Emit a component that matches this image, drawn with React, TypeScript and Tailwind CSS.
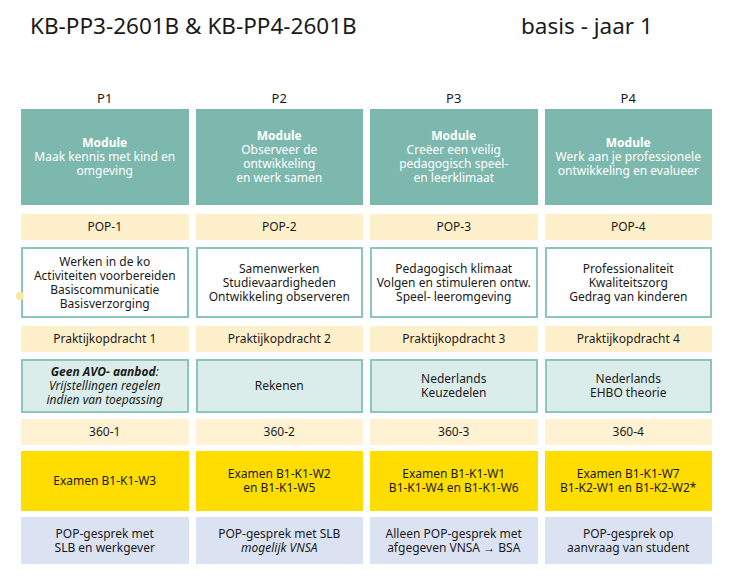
const font = { fontFamily: '"Noto Sans", "Open Sans", sans-serif' };

type Col = {
  p: string;
  module: string[];
  pop: string;
  topics: string[];
  opdracht: string;
  extra: React.ReactNode;
  r360: string;
  examen: string[];
  gesprek: React.ReactNode;
};

const cols: Col[] = [
  {
    p: "P1",
    module: ["Maak kennis met kind en", "omgeving"],
    pop: "POP-1",
    topics: ["Werken in de ko", "Activiteiten voorbereiden", "Basiscommunicatie", "Basisverzorging"],
    opdracht: "Praktijkopdracht 1",
    extra: (
      <span className="italic">
        <b>Geen AVO- aanbod</b>:<br />
        Vrijstellingen regelen
        <br />
        indien van toepassing
      </span>
    ),
    r360: "360-1",
    examen: ["Examen B1-K1-W3"],
    gesprek: (
      <>
        POP-gesprek met
        <br />
        SLB en werkgever
      </>
    ),
  },
  {
    p: "P2",
    module: ["Observeer de", "ontwikkeling", "en werk samen"],
    pop: "POP-2",
    topics: ["Samenwerken", "Studievaardigheden", "Ontwikkeling observeren"],
    opdracht: "Praktijkopdracht 2",
    extra: <>Rekenen</>,
    r360: "360-2",
    examen: ["Examen B1-K1-W2", "en B1-K1-W5"],
    gesprek: (
      <>
        POP-gesprek met SLB
        <br />
        <i>mogelijk VNSA</i>
      </>
    ),
  },
  {
    p: "P3",
    module: ["Creëer een veilig", "pedagogisch speel-", "en leerklimaat"],
    pop: "POP-3",
    topics: ["Pedagogisch klimaat", "Volgen en stimuleren ontw.", "Speel- leeromgeving"],
    opdracht: "Praktijkopdracht 3",
    extra: (
      <>
        Nederlands
        <br />
        Keuzedelen
      </>
    ),
    r360: "360-3",
    examen: ["Examen B1-K1-W1", "B1-K1-W4 en B1-K1-W6"],
    gesprek: (
      <>
        Alleen POP-gesprek met
        <br />
        afgegeven VNSA → BSA
      </>
    ),
  },
  {
    p: "P4",
    module: ["Werk aan je professionele", "ontwikkeling en evalueer"],
    pop: "POP-4",
    topics: ["Professionaliteit", "Kwaliteitszorg", "Gedrag van kinderen"],
    opdracht: "Praktijkopdracht 4",
    extra: (
      <>
        Nederlands
        <br />
        EHBO theorie
      </>
    ),
    r360: "360-4",
    examen: ["Examen B1-K1-W7", "B1-K2-W1 en B1-K2-W2*"],
    gesprek: (
      <>
        POP-gesprek op
        <br />
        aanvraag van student
      </>
    ),
  },
];

export default function App() {
  return (
    <div className="relative w-[751px] h-[577px] bg-white text-[#1a1a1a]" style={font}>
      <div className="flex pt-[10px] pl-[30px] h-[87px] text-[22.5px] leading-[32px]">
        <h1 className="w-[491px]">KB-PP3-2601B &amp; KB-PP4-2601B</h1>
        <h1>basis - jaar 1</h1>
      </div>

      <span className="absolute left-[16px] top-[292px] h-[8px] w-[8px] rounded-full bg-[#f6ec9c]" />

      <div className="ml-[21px] grid w-[691px] grid-cols-4 gap-x-[7px] text-center text-[12px] leading-[14px]">
        {cols.map((c) => (
          <div key={c.p} className="flex flex-col">
            <div className="h-[22px] text-[13px] leading-[22px]">{c.p}</div>
            <div className="flex h-[96px] flex-col items-center justify-center bg-[#7db8ae] text-white">
              <b>Module</b>
              {c.module.map((l) => (
                <span key={l}>{l}</span>
              ))}
            </div>
            <div className="mt-[9px] flex h-[26px] items-center justify-center bg-[#fff0cc]">{c.pop}</div>
            <div className="mt-[7px] flex h-[71px] flex-col items-center justify-center border-2 border-[#8cc5bb] bg-white">
              {c.topics.map((l) => (
                <span key={l}>{l}</span>
              ))}
            </div>
            <div className="mt-[8px] flex h-[26px] items-center justify-center bg-[#fff0cc]">{c.opdracht}</div>
            <div className="mt-[7px] flex h-[54px] items-center justify-center border-2 border-[#8cc5bb] bg-[#dbedea]">
              <div>{c.extra}</div>
            </div>
            <div className="mt-[6px] flex h-[26px] items-center justify-center bg-[#fff2d2]">{c.r360}</div>
            <div className="mt-[6px] flex h-[60px] flex-col items-center justify-center bg-[#ffdd00]">
              {c.examen.map((l) => (
                <span key={l}>{l}</span>
              ))}
            </div>
            <div className="mt-[6px] flex h-[47px] items-center justify-center bg-[#dbe3f3]">
              <div>{c.gesprek}</div>
            </div>
          </div>
        ))}
      </div>
    </div>
  );
}
